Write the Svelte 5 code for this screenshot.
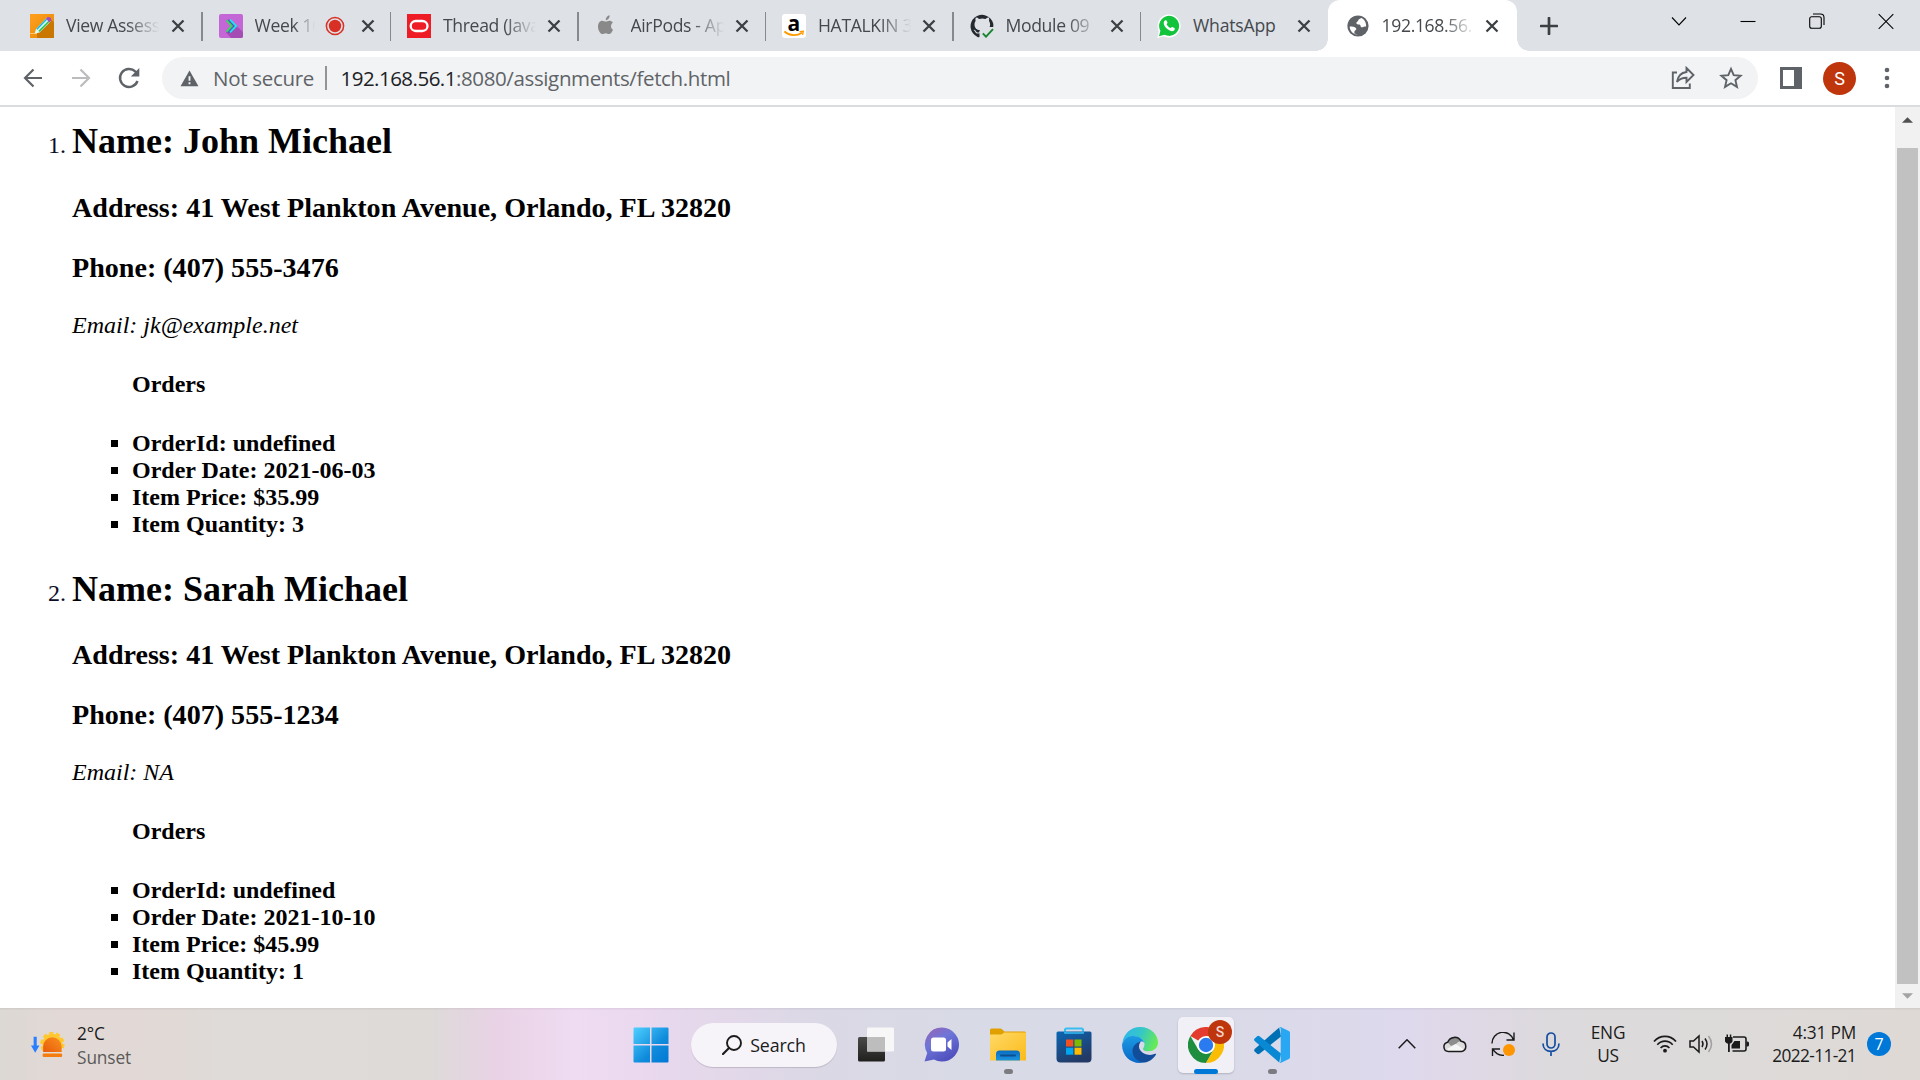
<script>
  const tabs = [
    { icon: 'pencil', title: 'View Assess' },
    { icon: 'week', title: 'Week 10', recording: true },
    { icon: 'oracle', title: 'Thread (Java' },
    { icon: 'apple', title: 'AirPods - Ap' },
    { icon: 'amazon', title: 'HATALKIN 3' },
    { icon: 'github', title: 'Module 09' },
    { icon: 'whatsapp', title: 'WhatsApp' },
    { icon: 'globe', title: '192.168.56.', active: true }
  ];

  const people = [
    {
      name: 'John Michael',
      address: '41 West Plankton Avenue, Orlando, FL 32820',
      phone: '(407) 555-3476',
      email: 'jk@example.net',
      order: ['OrderId: undefined', 'Order Date: 2021-06-03', 'Item Price: $35.99', 'Item Quantity: 3']
    },
    {
      name: 'Sarah Michael',
      address: '41 West Plankton Avenue, Orlando, FL 32820',
      phone: '(407) 555-1234',
      email: 'NA',
      order: ['OrderId: undefined', 'Order Date: 2021-10-10', 'Item Price: $45.99', 'Item Quantity: 1']
    }
  ];
</script>

{#snippet favicon(kind)}
  <svg class="favicon" viewBox="0 0 24 24">
    {#if kind === 'pencil'}
      <defs><linearGradient id="pc" x1="0" y1="0" x2="1" y2="1"><stop offset="0" stop-color="#ffa020" /><stop offset="1" stop-color="#e58800" /></linearGradient></defs>
      <rect width="24" height="24" fill="url(#pc)" />
      <path d="M7 19.5 20.5 5 24 8.5V24H7z" fill="#c97700" />
      <path d="M0 19.5h7" stroke="#ffc56b" stroke-width="1" />
      <path d="M4.6 19.6 6 14.9 17 3.6l3.8 3.6L9.6 18.4z" fill="#d9fbff" />
      <path d="m6.8 15.2 10-10.3" stroke="#19b6d8" stroke-width="1.5" />
      <path d="m9 17.4 10-10.2" stroke="#2cc54a" stroke-width="1.6" />
      <path d="m16 4.5 1.6-1.4q1.7-.7 3.2 1 1 1.5 0 2.9l-1.4 1.4z" fill="#a64dbb" />
    {:else if kind === 'week'}
      <rect width="24" height="24" rx="2" fill="#c566d6" />
      <path d="M17.5 12 24 18v4q0 2-2 2H12l-5-5.5z" fill="#a34db5" />
      <path d="m7.5 6 3.2-.5 7 6.6-7.2 6.8-3-.6 5.5-6z" fill="#5b4fc0" />
      <path d="M11 5.7 17.2 12 11 18.4" fill="none" stroke="#19e6ef" stroke-width="1.8" />
      <path d="M7.6 6.4 12.8 12l-5.2 5.6" fill="none" stroke="#2fe052" stroke-width="1.8" />
    {:else if kind === 'oracle'}
      <rect width="24" height="24" fill="#ee1c25" />
      <rect x="3.7" y="7" width="16.8" height="10" rx="5" fill="none" stroke="#fff" stroke-width="2.3" />
    {:else if kind === 'apple'}
      <path fill="#898989" d="M16 12.3c0-1.9 1-3 2-3.7-1-1.4-2.400-1.900-3.700-1.900-1.500 0-2.500.9-3.500.9S8.600 6.800 7.200 6.800C4.900 6.800 3 9 3 12.700c0 3.900 2.500 7.300 4.400 7.300 1.200 0 1.800-.8 3.300-.8s2 .8 3.300.8c1.700 0 3.300-2.300 4-4.300-1.300-.6-2-1.900-2-3.400zM10.700 6.200C10.600 3.800 12.400 1.500 14.600 1.200c.3 2.500-1.500 4.800-3.900 5z" />
    {:else if kind === 'amazon'}
      <rect width="24" height="24" rx="3" fill="#fff" />
      <text x="11.8" y="16.5" text-anchor="middle" class="amazon-a">a</text>
      <path d="M2.300 17.500c5.500 4.800 13 4.500 17.600 1.200" fill="none" stroke="#ff9900" stroke-width="1.8" />
      <path d="m17.500 17.600 3.800-.3-.7 3.600" fill="none" stroke="#ff9900" stroke-width="1.3" />
    {:else if kind === 'github'}
      <path fill="#24292f" d="M9.500 18.800v4.300q-1 .3-2-.2A11.500 11.500 0 1 1 23.200 9.500q.3 1.500 0 3.500h-3.600q.7-1.500.4-3.500-.3-1.800-1-2.600.4-1.700-.2-3.300-1.700 0-3.300 1.300a11 11 0 0 0-6.400 0Q7.500 3.600 5.800 3.600q-.6 1.600-.2 3.300-1.100 1.200-1.100 3.300c0 4 2.300 5.700 5.500 6-.5.5-.8 1.200-.8 2-1.200.5-2.500.3-3.300-1-.6-1-1.400-1.500-2.300-1.300.8.500 1.300 1.300 1.800 2.300.7 1.400 2.300 1.700 4.100 1z" />
      <path d="m12.800 19.300 3.200 3.400 7-7.500" fill="none" stroke="#18852f" stroke-width="1.9" />
    {:else if kind === 'whatsapp'}
      <path d="M.3 24 1.800 17A11.500 11.500 0 1 1 6.900 22.200z" fill="#fff" />
      <path d="m2 22.300 1.400-5.500a10 10 0 1 1 4 3.900z" fill="#12c33c" />
      <path d="M8.300 6.300c.6-.3 1.200-.1 1.400.4l.8 1.900c.2.500-.6 1.200-.9 1.600.9 1.900 2.200 3 4.100 3.900.6-.4 1.200-1.400 1.700-1.200l2 1c.9.500.1 2.400-.7 2.900-1.700 1-4.300 0-6.400-1.700-2-1.600-3.600-3.900-3.600-6 0-1.200.8-2.400 1.600-2.800z" fill="#fff" />
    {:else}
      <circle cx="12" cy="12" r="10.6" fill="#5f6368" />
      <path d="M15.300 4c-1.300.7-2.600 1-3.100 2.400-.4 1.200-1.900 1-1.800 2.600.1 1 .6 1.400 1.900 1.400 1.500 0 2.200.2 2.300 1.600.1 1.100.6 1.300 1.800 1.200 1.300-.2 1.700-.8 3.700-.7.300-4-1.700-7.100-4.800-8.500zM3.700 12.600c2.700.1 5.100 0 6.300 1.600.7 1 .1 1.700-.9 2.300-.9.500-.7 1.600-.7 2.900l3.300 1c-4.600.2-8-3.500-8-7.800z" fill="#fff" />
    {/if}
  </svg>
{/snippet}

<div class="screen">
  <header class="tabstrip">
    {#each tabs as tab, i}
      <div class="tab" class:active={tab.active} class:plain={i === 6}>
        {@render favicon(tab.icon)}
        <span class="title" class:short={tab.recording}>{tab.title}</span>
        {#if tab.recording}
          <svg class="rec" viewBox="0 0 20 20"><circle cx="10" cy="10" r="8.6" fill="none" stroke="#d93025" stroke-width="1.5" /><circle cx="10" cy="10" r="6.2" fill="#d93025" /></svg>
        {/if}
        <svg class="close" viewBox="0 0 14 14"><path d="m1.500 1.500 11 11m0-11-11 11" stroke="#3c4043" stroke-width="2.3" /></svg>
      </div>
    {/each}
    <svg class="plus" viewBox="0 0 18 18"><path d="M9 1v16M1 9h16" stroke="#3c4043" stroke-width="2.7" stroke-linecap="round" /></svg>
    <div class="window-buttons">
      <svg viewBox="0 0 16 16"><path d="m1 4.500 7 7.500 7-7.500" /></svg>
      <svg viewBox="0 0 16 16"><path d="M.5 8.500h15" /></svg>
      <svg viewBox="0 0 16 16"><rect x=".7" y="3.7" width="11.6" height="11.6" rx="2" /><path d="M4 1h7.500Q15 1 15 4.500V12" /></svg>
      <svg viewBox="0 0 16 16"><path d="m.7 1.200 14.600 14.600m0-14.600L.7 15.800" /></svg>
    </div>
  </header>

  <nav class="toolbar">
    <svg class="nav-icon" viewBox="0 0 24 24"><path d="M21 12H4m8.500-8.500L4 12l8.500 8.500" fill="none" stroke="#5f6368" stroke-width="2.2" /></svg>
    <svg class="nav-icon" viewBox="0 0 24 24"><path d="M3 12h17M11.500 3.500 20 12l-8.500 8.500" fill="none" stroke="#babcbe" stroke-width="2.2" /></svg>
    <svg class="nav-icon" viewBox="0 0 24 24"><path d="M20.500 15a9 9 0 1 1-2-9.300l2.500 2.600" fill="none" stroke="#5f6368" stroke-width="2.4" /><path d="M22.300 2v8.500h-8.500z" fill="#5f6368" /></svg>
    <div class="omnibox">
      <svg class="warn" viewBox="0 0 20 18"><path d="M10 .5 19.500 17.300H.5z" fill="#5f6368" /><path d="M10 6.500v5m0 1.500v2" stroke="#f1f3f4" stroke-width="2" /></svg>
      <span class="insecure">Not secure</span>
      <i class="rule"></i>
      <span class="url"><b>192.168.56.1</b>:8080/assignments/fetch.html</span>
      <svg class="share" viewBox="0 0 24 24"><path d="M6 6.500H1.800V22h17v-4.500M15.500 2l7 7-7 7v-4.200c-4.300 0-7.300 1.200-9.600 4.200.8-5 3.800-9.300 9.600-10z" /></svg>
      <svg class="star" viewBox="0 0 24 24"><path d="m12 2.800 2.700 6.300 6.900.6-5.200 4.500 1.600 6.700-6-3.600-6 3.600 1.600-6.700-5.200-4.500 6.900-.6z" /></svg>
    </div>
    <svg class="panel" viewBox="0 0 22 22"><path d="M0 0h22v22H0zM3 3v16h11V3z" fill="#5f6368" fill-rule="evenodd" /></svg>
    <span class="avatar">S</span>
    <svg class="more" viewBox="0 0 6 22"><circle cx="3" cy="3" r="2.3" /><circle cx="3" cy="11" r="2.3" /><circle cx="3" cy="19" r="2.3" /></svg>
  </nav>

  <div class="viewport">
    <ol class="people">
      {#each people as p}
        <li>
          <h2>Name: {p.name}</h2>
          <h3>Address: {p.address}</h3>
          <h3>Phone: {p.phone}</h3>
          <div class="email">Email: {p.email}</div>
          <ul>
            <h4>Orders</h4>
            {#each p.order as line}
              <li>{line}</li>
            {/each}
          </ul>
        </li>
      {/each}
    </ol>
    <div class="scrollbar">
      <svg class="arrow" viewBox="0 0 12 6"><path d="M0 6 6 0l6 6z" fill="#505050" /></svg>
      <div class="thumb"></div>
      <svg class="arrow" viewBox="0 0 12 6"><path d="m0 0 6 6 6-6z" fill="#a3a3a3" /></svg>
    </div>
  </div>

  <footer class="taskbar">
    <svg class="weather" viewBox="0 0 36 26">
      <defs><linearGradient id="sun" x1="1" y1="0" x2="0" y2="1"><stop offset="0" stop-color="#f9931e" /><stop offset="1" stop-color="#e8590c" /></linearGradient></defs>
      <path d="M2.700 4.500h3.200v9h2.800L4.300 21 0 13.500h2.700z" fill="#2a7fff" />
      <circle cx="22" cy="12" r="10.5" fill="#ffc82e" />
      <circle cx="22" cy="12" r="11" fill="none" stroke="#ffc82e" stroke-width="3" stroke-dasharray="4.2 2.7" />
      <path d="M12.500 20.500v-6a9.500 9.500 0 0 1 19 0v6z" fill="url(#sun)" />
      <path d="M9 20.200h26V22H9z" fill="#e3dbd8" />
      <rect x="12" y="21.8" width="20" height="3.6" rx="1" fill="#f57c0f" />
    </svg>
    <div class="forecast"><span>2°C</span><span class="dim">Sunset</span></div>

    <svg class="start" viewBox="0 0 36 36">
      <defs><linearGradient id="win" x1="0" y1="0" x2="1" y2="1"><stop offset="0" stop-color="#4fd0ff" /><stop offset=".6" stop-color="#0f8bdc" /><stop offset="1" stop-color="#0078d4" /></linearGradient></defs>
      <path d="M1.500.5H17V17H.5V1.500q0-1 1-1zM18.500.5h16q1 0 1 1V17h-17zM.5 18.500H17v17H1.500q-1 0-1-1zM18.500 18.500h17v16q0 1-1 1h-16z" fill="url(#win)" />
    </svg>
    <div class="search">
      <svg viewBox="0 0 20 20"><circle cx="12" cy="8" r="7" fill="none" stroke="#1b1b1b" stroke-width="1.9" /><path d="m7 13-6 6" stroke="#1b1b1b" stroke-width="2.1" stroke-linecap="round" /></svg>
      <span>Search</span>
    </div>

    <div class="apps">
      <div class="app">
        <svg viewBox="0 0 36 36">
          <defs><linearGradient id="tv" x1="0" y1="0" x2="0" y2="1"><stop offset="0" stop-color="#4a4a48" /><stop offset="1" stop-color="#20201f" /></linearGradient></defs>
          <rect y="10" width="27" height="24.5" rx="1.5" fill="url(#tv)" />
          <rect x="9" y=".5" width="27" height="24" rx="1.2" fill="#fafafa" opacity=".9" />
          <rect x="9" y="10" width="18" height="14.5" fill="#bdbdbd" />
        </svg>
      </div>
      <div class="app">
        <svg viewBox="0 0 36 36">
          <defs><linearGradient id="chat" x1="0" y1="0" x2=".6" y2="1"><stop offset="0" stop-color="#9a62b0" /><stop offset=".45" stop-color="#6f76d8" /><stop offset="1" stop-color="#4f4fbd" /></linearGradient></defs>
          <path d="M18 .6a17 17 0 1 1-8 32L.5 34.600l2.700-8.500A17 17 0 0 1 18 .6z" fill="url(#chat)" />
          <rect x="7" y="10.6" width="15" height="14" rx="2.5" fill="#fff" />
          <path d="m23.500 15.600 4-3.500v11l-4-3.500z" fill="#fff" />
        </svg>
      </div>
      <div class="app">
        <svg viewBox="0 0 36 36">
          <defs>
            <linearGradient id="fold" x1="0" y1="0" x2="1" y2="1"><stop offset="0" stop-color="#ffd968" /><stop offset="1" stop-color="#fbbb18" /></linearGradient>
            <linearGradient id="fb" x1="0" y1="0" x2="0" y2="1"><stop offset="0" stop-color="#0a6cc2" /><stop offset="1" stop-color="#1b95e0" /></linearGradient>
          </defs>
          <path d="M0 9V3q0-1.500 1.500-1.500H10q1.500 0 2.600 1.200L14.500 4.500H34.500Q36 4.500 36 6v3z" fill="#dfa000" />
          <path d="M0 7.500h10.500q1.300 0 2.200-.8l1.300-1.200h22v28H0z" fill="url(#fold)" />
          <path d="M6 33.500V27q0-3.500 3.500-3.500h17q3.500 0 3.500 3.500v6.500z" fill="url(#fb)" />
          <path d="M11 28.500h14" stroke="#0d4f8e" stroke-width="2" stroke-linecap="round" />
        </svg>
        <i class="running"></i>
      </div>
      <div class="app">
        <svg viewBox="0 0 36 36">
          <defs><linearGradient id="store" x1="0" y1="0" x2=".5" y2="1"><stop offset="0" stop-color="#0a66b4" /><stop offset="1" stop-color="#243a66" /></linearGradient></defs>
          <path d="M9 8V3q0-1.500 1.500-1.500h15Q27 1.500 27 3v5" fill="none" stroke="#39bdf0" stroke-width="2" />
          <path d="M.5 6q0-1.500 1.500-1.500h32q1.500 0 1.500 1.500v25.500q0 4-4 4h-27q-4 0-4-4z" fill="url(#store)" />
          <path d="M9 4.500V6h18V4.500" fill="none" stroke="#39bdf0" stroke-width="1.6" />
          <path d="M10 12.500h7.300v7H10z" fill="#f25022" /><path d="M18.500 12.500h7v7h-7z" fill="#7fba00" /><path d="M10 20.700h7.300v7H10z" fill="#00a4ef" /><path d="M18.500 20.700h7v7h-7z" fill="#ffb900" />
        </svg>
      </div>
      <div class="app">
        <svg viewBox="0 0 36 36">
          <defs>
            <linearGradient id="e1" x1="0" y1=".2" x2="1" y2=".5"><stop offset="0" stop-color="#2fb6ee" /><stop offset=".5" stop-color="#35c7c5" /><stop offset="1" stop-color="#66eb55" /></linearGradient>
            <linearGradient id="e2" x1="0" y1="0" x2="0" y2="1"><stop offset="0" stop-color="#1b9be3" /><stop offset="1" stop-color="#0a67c8" /></linearGradient>
          </defs>
          <path d="M.3 16.500C1.500 6 9.500 0 18 0c10.500 0 18 7.500 18 15.500 0 5-3.800 8.800-9.500 8.800-4.500 0-5.500-1.500-5.500-2.500 0-.8 1.500-1.700 1.500-4.600 0-4-4.500-8-10.500-8-5 0-9.500 3-11.700 7.300z" fill="url(#e1)" />
          <path d="M0 17.500C2 11.500 6.500 9 11.500 9c6 0 10 3.500 10.800 7-1-1.500-2.300-1.700-3.500-1.500-3.500.7-5.300 4-4.800 8 .7 6 5.500 10.500 10 11.800C22 35.500 20 36 18 36 7.500 36 0 28 0 17.500z" fill="url(#e2)" />
          <path d="M18.800 14.500c-3.500.6-8.300 4-8.300 9.500 0 6.500 5.800 11.300 12 11.500 5.200-.8 9.300-4.200 11.400-7.800.4-.7-.1-1.200-.8-.9-2.600 1.300-5.600 1.400-8.300.7-4.500-1.100-8.800-4.700-7.600-9.700.4-1.500 1-2.300 1.600-3.300z" fill="#114d98" />
        </svg>
      </div>
      <div class="app current">
        <svg viewBox="0 0 36 36">
          <path d="M18 18 2.400 9A18 18 0 0 1 33.600 9H18z" fill="#e33b2e" />
          <path d="M2.400 9A18 18 0 0 0 18 36l7.800-13.500L18 27l-7.800-4.500z" fill="#1e8e3e" />
          <path d="M33.600 9A18 18 0 0 1 18 36l7.800-13.500V13.500L18 9z" fill="#fbbc04" />
          <circle cx="18" cy="18" r="9" fill="#fff" />
          <circle cx="18" cy="18" r="7.2" fill="#2a7bf0" />
        </svg>
        <span class="badge">S</span>
        <i class="running wide"></i>
      </div>
      <div class="app">
        <svg viewBox="0 0 36 36">
          <path d="M27 9.500 5.500 26.800q-1.200.9-2.400 0L.7 24.600q-1.200-1.200 0-2.500L25.200.4z" fill="#0070b4" />
          <path d="M27 26.500 5.500 9.200q-1.200-.9-2.400 0L.7 11.400q-1.200 1.200 0 2.500L25.200 35.600z" fill="#0989d3" />
          <path d="M26.500.1 34.900 4q1.100.6 1.100 1.800v24.400q0 1.200-1.100 1.800l-8.400 3.900q-1 .3-1.800-.4 2 .7 2-1.500V2q0-2.200-2-1.500.8-.7 1.800-.4z" fill="#29a7f2" />
        </svg>
        <i class="running"></i>
      </div>
    </div>

    <div class="tray">
      <svg class="t-chev" viewBox="0 0 18 10"><path d="m.7 9.300 8.300-8.500 8.300 8.500" fill="none" stroke="#1b1b1b" stroke-width="1.5" /></svg>
      <svg class="t-cloud" viewBox="0 0 24 18">
        <path d="M5.500 16.500a4.700 4.700 0 0 1-.8-9.300A7.300 7.300 0 0 1 18 6.200a5.200 5.200 0 0 1 .5 10.300z" fill="#dcdcdc" />
        <path d="M4.700 7.200A7.300 7.300 0 0 1 18 6.200q-3 0-4.500 2.300L8 11z" fill="#8d8d8d" />
        <path d="m4 14 9-5 8 5.500-2.500 2h-13z" fill="#f6f6f6" />
        <path d="M5.500 16.500a4.700 4.700 0 0 1-.8-9.300A7.300 7.300 0 0 1 18 6.200a5.200 5.200 0 0 1 .5 10.300z" fill="none" stroke="#1b1b1b" stroke-width="1.5" />
      </svg>
      <svg class="t-sync" viewBox="0 0 24 24">
        <path d="M1 11.500A11 11 0 0 1 22.500 8M23 .5V8h-7.500M1.500 24v-7H9M2 17.300q4 6.500 11 6" fill="none" stroke="#1b1b1b" stroke-width="1.4" />
        <circle cx="18" cy="18" r="6" fill="#ff9500" />
      </svg>
      <svg class="t-mic" viewBox="0 0 18 24"><rect x="5" y="1" width="8" height="15" rx="4" /><path d="M1 11.500c0 5 3.500 7.800 8 7.800s8-2.800 8-7.800M9 19.500V24" /></svg>
      <div class="lang"><span>ENG</span><span>US</span></div>
      <svg class="t-wifi" viewBox="0 0 24 18"><path d="M1 6.500c6-6.800 16-6.800 22 0M4.300 9.800c4.300-4.800 11.100-4.800 15.400 0M7.600 13c2.500-2.800 6.300-2.800 8.800 0" /><circle cx="12" cy="15.7" r="1.9" /></svg>
      <svg class="t-vol" viewBox="0 0 24 20"><path d="M1 7h3.500l5.500-5v16l-5.500-5H1zM13 7q2 3 0 6M16 4.500q4 5.500 0 11" /><path d="M19.500 2q6 8 0 16" opacity=".3" /></svg>
      <svg class="t-bat" viewBox="0 0 24 20">
        <path d="M8 3h11q2 0 2 2v10q0 2-2 2H7.500" fill="none" stroke="#1b1b1b" stroke-width="1.6" /><path d="M21.500 7.500h1q1.500 0 1.500 1.500v2q0 1.500-1.500 1.500h-1zM9.500 7H15v7.500H6.500V11zM0 3h7.500v4.500q-1 2-2.700 2.300V18H3V9.800Q1 9.300 0 7.500zM1.500.5H3V4H1.500zM4.800.5h1.500V4H4.800z" fill="#1b1b1b" />
      </svg>
      <div class="clock"><span>4:31 PM</span><span class="date">2022-11-21</span></div>
      <span class="count">7</span>
    </div>
  </footer>
</div>

<style>
  :global(body) { margin: 0; overflow: hidden; }
  .screen {
    width: 1920px; height: 1080px; background: #fff; color: #000;
    display: flex; flex-direction: column; overflow: hidden;
    font-family: "Open Sans", "Noto Sans", sans-serif;
  }
  svg { display: block; flex: none; }

  .tabstrip { height: 51px; flex: none; display: flex; align-items: center; background: #dee1e6; padding-left: 14px; box-sizing: border-box; }
  .tab {
    width: 187.5px; height: 51px; box-sizing: border-box; padding: 0 0 0 16px; flex: none;
    display: flex; align-items: center; position: relative;
  }
  .tab:first-child { width: 188.5px; }
  .tab:nth-child(2) { width: 188.5px; }
  .tab:not(.active):not(.plain)::after { content: ""; position: absolute; right: 0; top: 12px; width: 1.5px; height: 29px; background: #86898d; }
  .favicon { width: 24px; height: 24px; }
  .amazon-a { font: 700 21px "Open Sans", sans-serif; }
  .title {
    margin-left: 12px; width: 95px; flex: none; font-size: 17.6px; letter-spacing: -.35px; color: #45494d; white-space: nowrap;
    line-height: 26px; padding-bottom: 1px; -webkit-mask-image: linear-gradient(90deg, #000 64%, transparent 98%); mask-image: linear-gradient(90deg, #000 64%, transparent 98%);
  }
  .plain .title { -webkit-mask-image: none; mask-image: none; letter-spacing: -.2px; }
  .title.short { width: 61px; }
  .rec { width: 20px; height: 20px; margin-left: 9px; }
  .close { width: 14px; height: 14px; margin-left: 9px; }
  .tab:first-child .close { margin-left: 10px; }
  .rec + .close { margin-left: 16px; }
  .active { background: #fff; border-radius: 12px 12px 0 0; width: 189px; padding-left: 18px; margin-left: -1px; }
  .active .close { margin-left: 8px; }
  .active::before, .active::after { content: ""; position: absolute; bottom: 0; width: 12px; height: 12px; }
  .active::before { left: -12px; background: radial-gradient(circle at 0 0, transparent 11.5px, #fff 12px); }
  .active::after { right: -12px; background: radial-gradient(circle at 12px 0, transparent 11.5px, #fff 12px); }
  .plus { width: 18px; height: 18px; margin-left: 23px; }
  .window-buttons { display: flex; gap: 53px; margin-left: auto; margin-right: 26px; align-self: flex-start; padding-top: 13px; }
  .window-buttons svg { width: 16px; height: 16px; fill: none; stroke: #000; stroke-width: 1.1; }

  .toolbar { height: 56px; flex: none; box-sizing: border-box; border-bottom: 2px solid #dadce0; display: flex; align-items: center; padding-left: 21px; }
  .nav-icon { width: 24px; height: 24px; margin-right: 24px; }
  .omnibox { width: 1596px; height: 42px; margin-left: -3px; border-radius: 21px; background: #f1f3f4; display: flex; align-items: center; box-sizing: border-box; padding: 0 15px 0 18px; flex: none; }
  .warn { width: 19px; height: 17px; }
  .insecure { font-size: 20.5px; letter-spacing: -.3px; color: #5f6368; margin-left: 14px; width: 112px; white-space: nowrap; }
  .rule { width: 1.5px; height: 24px; background: #909498; }
  .url { margin-left: 14px; font-size: 20.5px; letter-spacing: -.37px; color: #5f6368; white-space: nowrap; }
  .url b { color: #202124; font-weight: 400; letter-spacing: -.52px; }
  .share, .star { width: 24px; height: 24px; fill: none; stroke: #5f6368; stroke-width: 1.9; }
  .share { margin-left: auto; margin-right: 24px; }
  .panel { width: 22px; height: 22px; margin-left: 22px; }
  .avatar { width: 33px; height: 33px; border-radius: 50%; background: #bf360c; color: #fff; font: 18px/33px Roboto, sans-serif; text-align: center; margin-left: 21px; }
  .more { width: 6px; height: 22px; fill: #5f6368; margin-left: 28px; }

  .viewport { height: 901px; flex: none; display: flex; justify-content: space-between; overflow: hidden; font-family: "Liberation Serif", serif; }
  .people { margin: 0; padding: 14px 0 0 72px; font-size: 24px; line-height: 27px; }
  .people > li { height: 447.5px; }
  .people > li::marker { color: #0c0c28; }
  h2 { margin: 0; font-size: 36px; line-height: 41px; }
  h3 { margin: 28px 0 0; font-size: 28.08px; line-height: 32px; }
  h2 + h3 { margin-top: 29.9px; }
  .email { font-style: italic; margin-top: 28px; }
  ul { margin: 0; padding-left: 60px; font-weight: 700; list-style: square; }
  h4 { margin: 32px 0; font-size: 24px; line-height: 27px; }
  .scrollbar { width: 25px; background: #f1f1f1; display: flex; flex-direction: column; align-items: center; justify-content: space-between; padding: 10px 0 9px; box-sizing: border-box; }
  .arrow { width: 11px; height: 6px; }
  .thumb { width: 21px; height: 836px; background: #c1c1c1; margin-top: 16px; }

  .taskbar {
    height: 72px; flex: none; display: flex; align-items: center; box-sizing: border-box; padding-left: 31px; color: #1b1b1b;
    background: linear-gradient(90deg, #dcd8d3 0, #e2d9d6 60px, #e1d9d6 170px, #dedbd9 230px, #dddad8 430px, #e9d2e6 500px, #efdcf2 575px, #e9d8ee 650px, #dcd8e6 800px, #d8dae6 960px, #d9dae8 1220px, #ded9ed 1400px, #dfd8e6 1470px, #dcdadc 1560px, #dddad8 1800px, #dfd9d5 1920px);
    box-shadow: inset 0 1.5px #0000000d;
  }
  .weather { width: 35px; height: 26px; margin-top: 2px; }
  .forecast { display: flex; flex-direction: column; margin-left: 11px; padding-top: 3px; width: 556px; font-size: 17.3px; line-height: 24px; letter-spacing: -.1px; }
  .dim { color: #5b5a59; }
  .start { width: 36px; height: 36px; margin-top: 2px; }
  .search { width: 146px; height: 44px; border-radius: 22px; margin: 2px 0 0 22px; background: #f6f4f9; box-shadow: 0 1px 1px #00000026; display: flex; align-items: center; justify-content: center; gap: 8px; box-sizing: border-box; font-size: 17.8px; letter-spacing: -.1px; }
  .search svg { width: 20px; height: 20px; }
  .apps { display: flex; gap: 30px; margin: 2px 0 0 21px; }
  .app { width: 36px; height: 36px; position: relative; }
  .app svg { width: 36px; height: 36px; position: relative; }
  .current::before { content: ""; position: absolute; inset: -10px; border-radius: 5px; background: #f0f0f6; box-shadow: 0 1px 2px #00000030; }
  .running { position: absolute; left: 14px; top: 42px; width: 9px; height: 5px; border-radius: 3px; background: #7c7b80; }
  .running.wide { left: 6px; width: 24px; background: #0078d7; }
  .badge { position: absolute; left: 20px; top: -7px; width: 24px; height: 24px; border-radius: 50%; background: #bf360c; color: #f3d5cb; font: 500 14px/24px Roboto, sans-serif; text-align: center; }
  .tray { display: flex; align-items: center; margin-left: auto; margin-right: 29px; font-size: 17.3px; letter-spacing: -.2px; line-height: 23px; }
  .t-chev { width: 18px; height: 10px; }
  .t-cloud { width: 24px; height: 18px; margin-left: 27px; }
  .t-sync { width: 24px; height: 24px; margin-left: 24px; }
  .t-mic { width: 18px; height: 24px; margin-left: 27px; fill: none; stroke: #154ea0; stroke-width: 1.7; }
  .lang { display: flex; flex-direction: column; align-items: center; width: 48px; margin-left: 24px; }
  .t-wifi { width: 24px; height: 18px; margin-left: 21px; fill: none; stroke: #1b1b1b; stroke-width: 1.7; }
  .t-wifi circle { fill: #1b1b1b; stroke: none; }
  .t-vol { width: 24px; height: 20px; margin-left: 12px; fill: none; stroke: #1b1b1b; stroke-width: 1.5; }
  .t-bat { width: 24px; height: 20px; margin-left: 12px; }
  .clock { display: flex; flex-direction: column; align-items: flex-end; width: 107px; }
  .date { letter-spacing: -.65px; }
  .count { width: 24px; height: 24px; border-radius: 50%; background: #0078d7; color: #fff; text-align: center; line-height: 24px; font-size: 16px; margin-left: 11px; }
</style>
